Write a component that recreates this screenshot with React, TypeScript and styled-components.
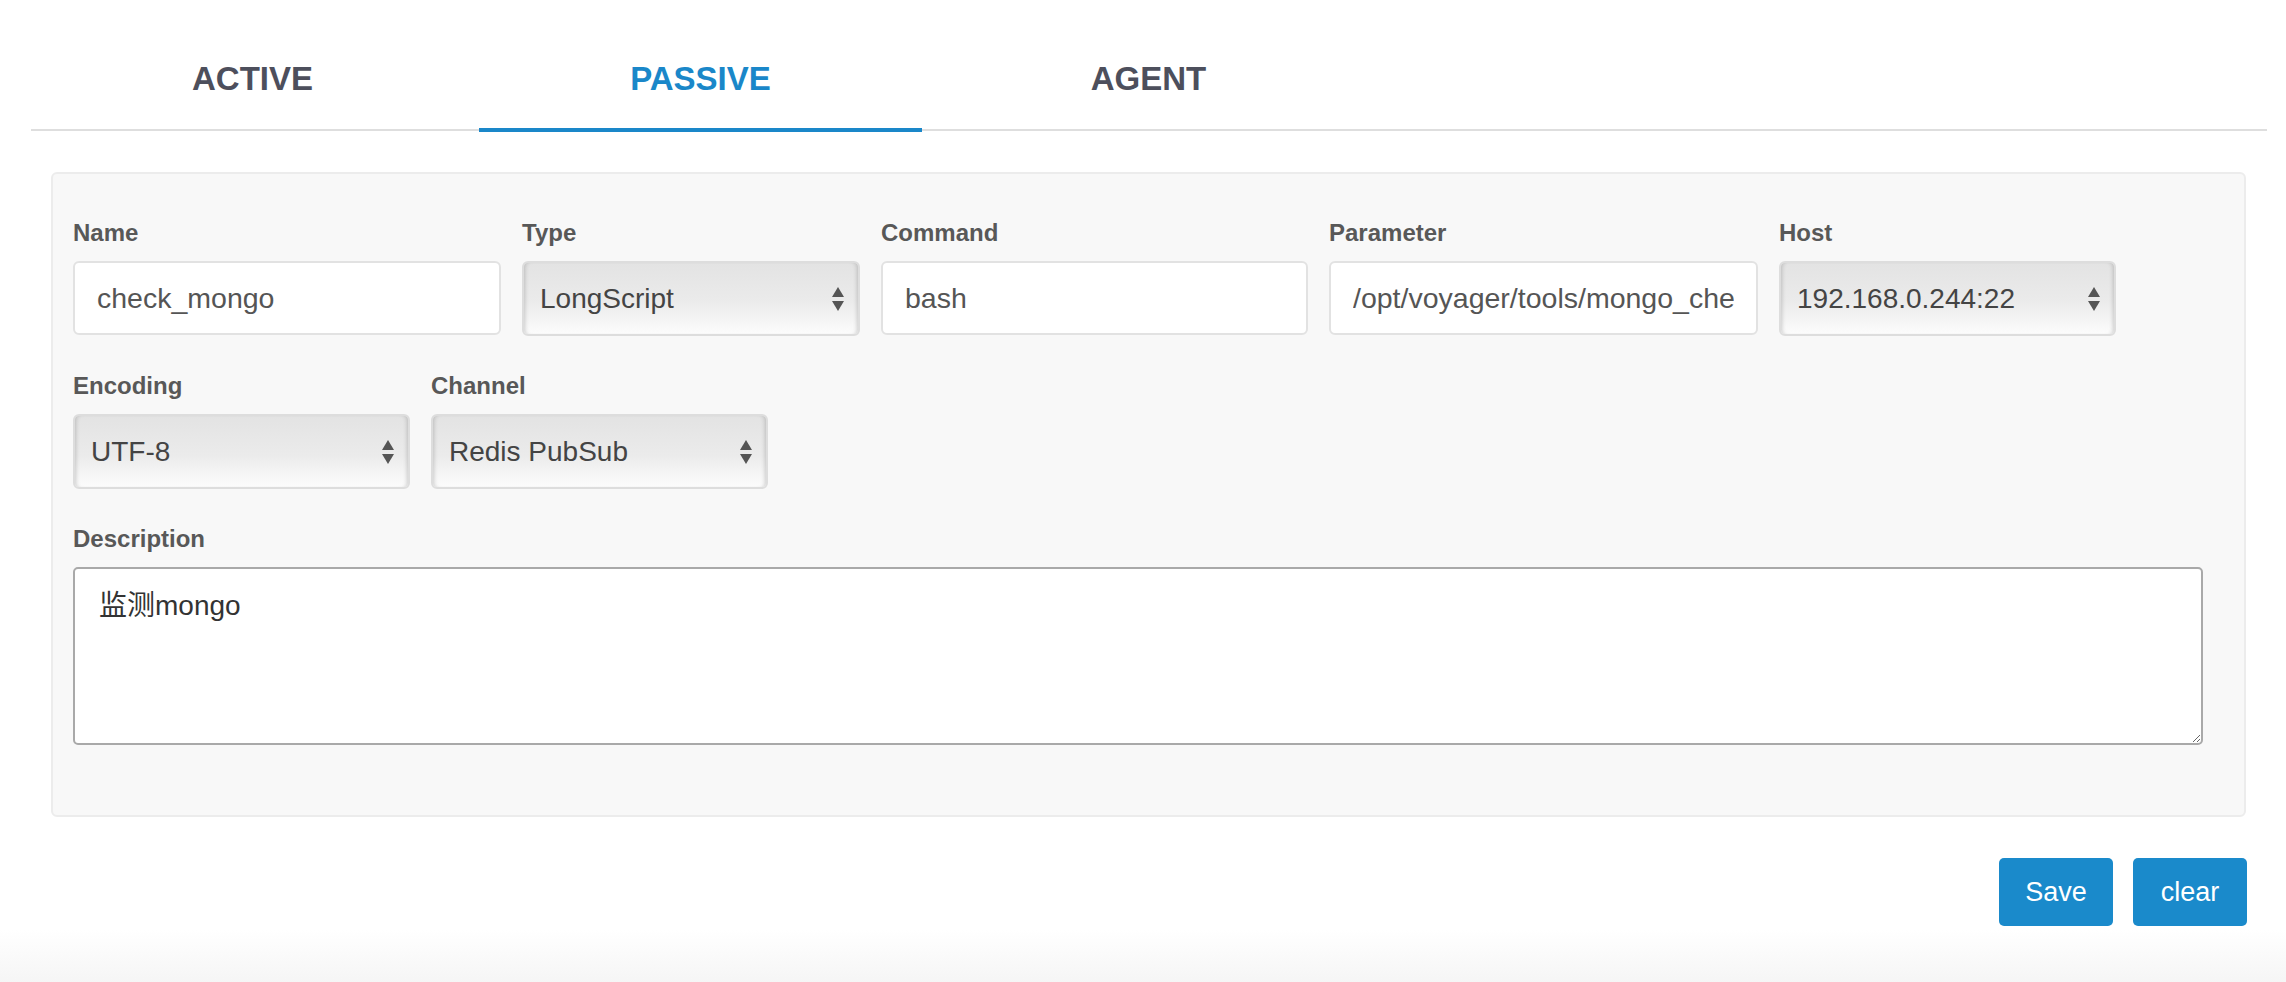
import styled, { createGlobalStyle } from "styled-components";

const GlobalStyle = createGlobalStyle`
  body {
    margin: 0;
    background: #ffffff;
    font-family: "Liberation Sans", "Noto Sans CJK SC", sans-serif;
  }
`;

const Page = styled.div`
  width: 2236px;
  margin-left: 31px;
`;

const TabList = styled.div`
  display: flex;
  gap: 5px;
  border-bottom: 2px solid #dedede;
`;

const Tab = styled.div<{ $active?: boolean }>`
  position: relative;
  width: 443px;
  padding: 59px 0 30px;
  text-align: center;
  font-size: 33px;
  line-height: 40px;
  font-weight: 700;
  color: ${(p) => (p.$active ? "#1a87c9" : "#4d4f5c")};
  cursor: pointer;

  &::after {
    content: "";
    display: ${(p) => (p.$active ? "block" : "none")};
    position: absolute;
    left: 0;
    right: 0;
    bottom: -3px;
    height: 4px;
    background: #1a87c9;
  }
`;

const Panel = styled.div`
  margin: 41px 21px 0 20px;
  padding: 44px 41px 70px 20px;
  background: #f8f8f8;
  border: 2px solid #ececec;
  border-radius: 6px;
`;

const Row = styled.div<{ $last?: boolean }>`
  display: flex;
  gap: 21px;
  margin-bottom: ${(p) => (p.$last ? 0 : 35)}px;
`;

const Field = styled.div<{ $w?: number }>`
  display: flex;
  flex-direction: column;
  width: ${(p) => (p.$w ? `${p.$w}px` : "100%")};
`;

const Label = styled.label`
  font-size: 24px;
  line-height: 29px;
  font-weight: 700;
  color: #585858;
  margin-bottom: 14px;
`;

const TextInput = styled.input`
  box-sizing: border-box;
  width: 100%;
  height: 74px;
  padding: 0 22px;
  border: 2px solid #e2e2e2;
  border-radius: 6px;
  background: #ffffff;
  font-family: "Liberation Sans", sans-serif;
  font-size: 28.5px;
  color: #555555;
  outline: none;
`;

const SelectWrap = styled.div`
  position: relative;
  width: 100%;
`;

const Select = styled.select`
  box-sizing: border-box;
  width: 100%;
  height: 75px;
  padding: 0 50px 0 16px;
  appearance: none;
  border: 2px solid #dddddd;
  border-radius: 6px;
  background: linear-gradient(#e3e3e3 0%, #ebebeb 55%, #fcfcfc 100%);
  box-shadow: inset 4px 0 4px -3px rgba(0, 0, 0, 0.18),
    inset -4px 0 4px -3px rgba(0, 0, 0, 0.18);
  font-family: "Liberation Sans", sans-serif;
  font-size: 28px;
  color: #444444;
  outline: none;
`;

const Arrows = styled.svg`
  position: absolute;
  right: 16px;
  top: 50%;
  transform: translateY(-50%);
  pointer-events: none;
`;

const TextArea = styled.textarea`
  box-sizing: border-box;
  width: 100%;
  height: 178px;
  padding: 14px 24px;
  border: 2px solid #a9a9a9;
  border-radius: 5px;
  background: #ffffff;
  font-family: "Liberation Sans", "Noto Sans CJK SC", sans-serif;
  font-size: 28px;
  color: #333333;
  outline: none;
`;

const Actions = styled.div`
  display: flex;
  justify-content: flex-end;
  gap: 20px;
  margin: 41px 20px 0 0;
`;

const Button = styled.button`
  width: 114px;
  height: 68px;
  border: none;
  border-radius: 5px;
  background: #1a8acb;
  color: #ffffff;
  font-family: "Liberation Sans", sans-serif;
  font-size: 27px;
  cursor: pointer;
`;

const Footer = styled.div`
  margin-top: 4px;
  height: 54px;
  background: linear-gradient(#ffffff, #f5f5f5);
`;

const SelectBox = ({ value, options }: { value: string; options: string[] }) => (
  <SelectWrap>
    <Select defaultValue={value}>
      {options.map((o) => (
        <option key={o}>{o}</option>
      ))}
    </Select>
    <Arrows width="12" height="24" viewBox="0 0 12 24">
      <path d="M6 0 L12 10 L0 10 Z" fill="#555" />
      <path d="M0 14 L12 14 L6 24 Z" fill="#555" />
    </Arrows>
  </SelectWrap>
);

const tabs = ["ACTIVE", "PASSIVE", "AGENT"];

const App = () => {
  return (
    <>
      <GlobalStyle />
      <Page>
        <TabList>
          {tabs.map((t) => (
            <Tab key={t} $active={t === "PASSIVE"}>
              {t}
            </Tab>
          ))}
        </TabList>

        <Panel>
          <Row>
            <Field $w={428}>
              <Label>Name</Label>
              <TextInput defaultValue="check_mongo" />
            </Field>
            <Field $w={338}>
              <Label>Type</Label>
              <SelectBox value="LongScript" options={["LongScript", "ShortScript"]} />
            </Field>
            <Field $w={427}>
              <Label>Command</Label>
              <TextInput defaultValue="bash" />
            </Field>
            <Field $w={429}>
              <Label>Parameter</Label>
              <TextInput defaultValue="/opt/voyager/tools/mongo_check.sh" />
            </Field>
            <Field $w={337}>
              <Label>Host</Label>
              <SelectBox value="192.168.0.244:22" options={["192.168.0.244:22"]} />
            </Field>
          </Row>

          <Row>
            <Field $w={337}>
              <Label>Encoding</Label>
              <SelectBox value="UTF-8" options={["UTF-8", "GBK"]} />
            </Field>
            <Field $w={337}>
              <Label>Channel</Label>
              <SelectBox value="Redis PubSub" options={["Redis PubSub", "Kafka"]} />
            </Field>
          </Row>

          <Row $last>
            <Field>
              <Label>Description</Label>
              <TextArea defaultValue="监测mongo" />
            </Field>
          </Row>
        </Panel>

        <Actions>
          <Button>Save</Button>
          <Button>clear</Button>
        </Actions>
      </Page>
      <Footer />
    </>
  );
};

export default App;
